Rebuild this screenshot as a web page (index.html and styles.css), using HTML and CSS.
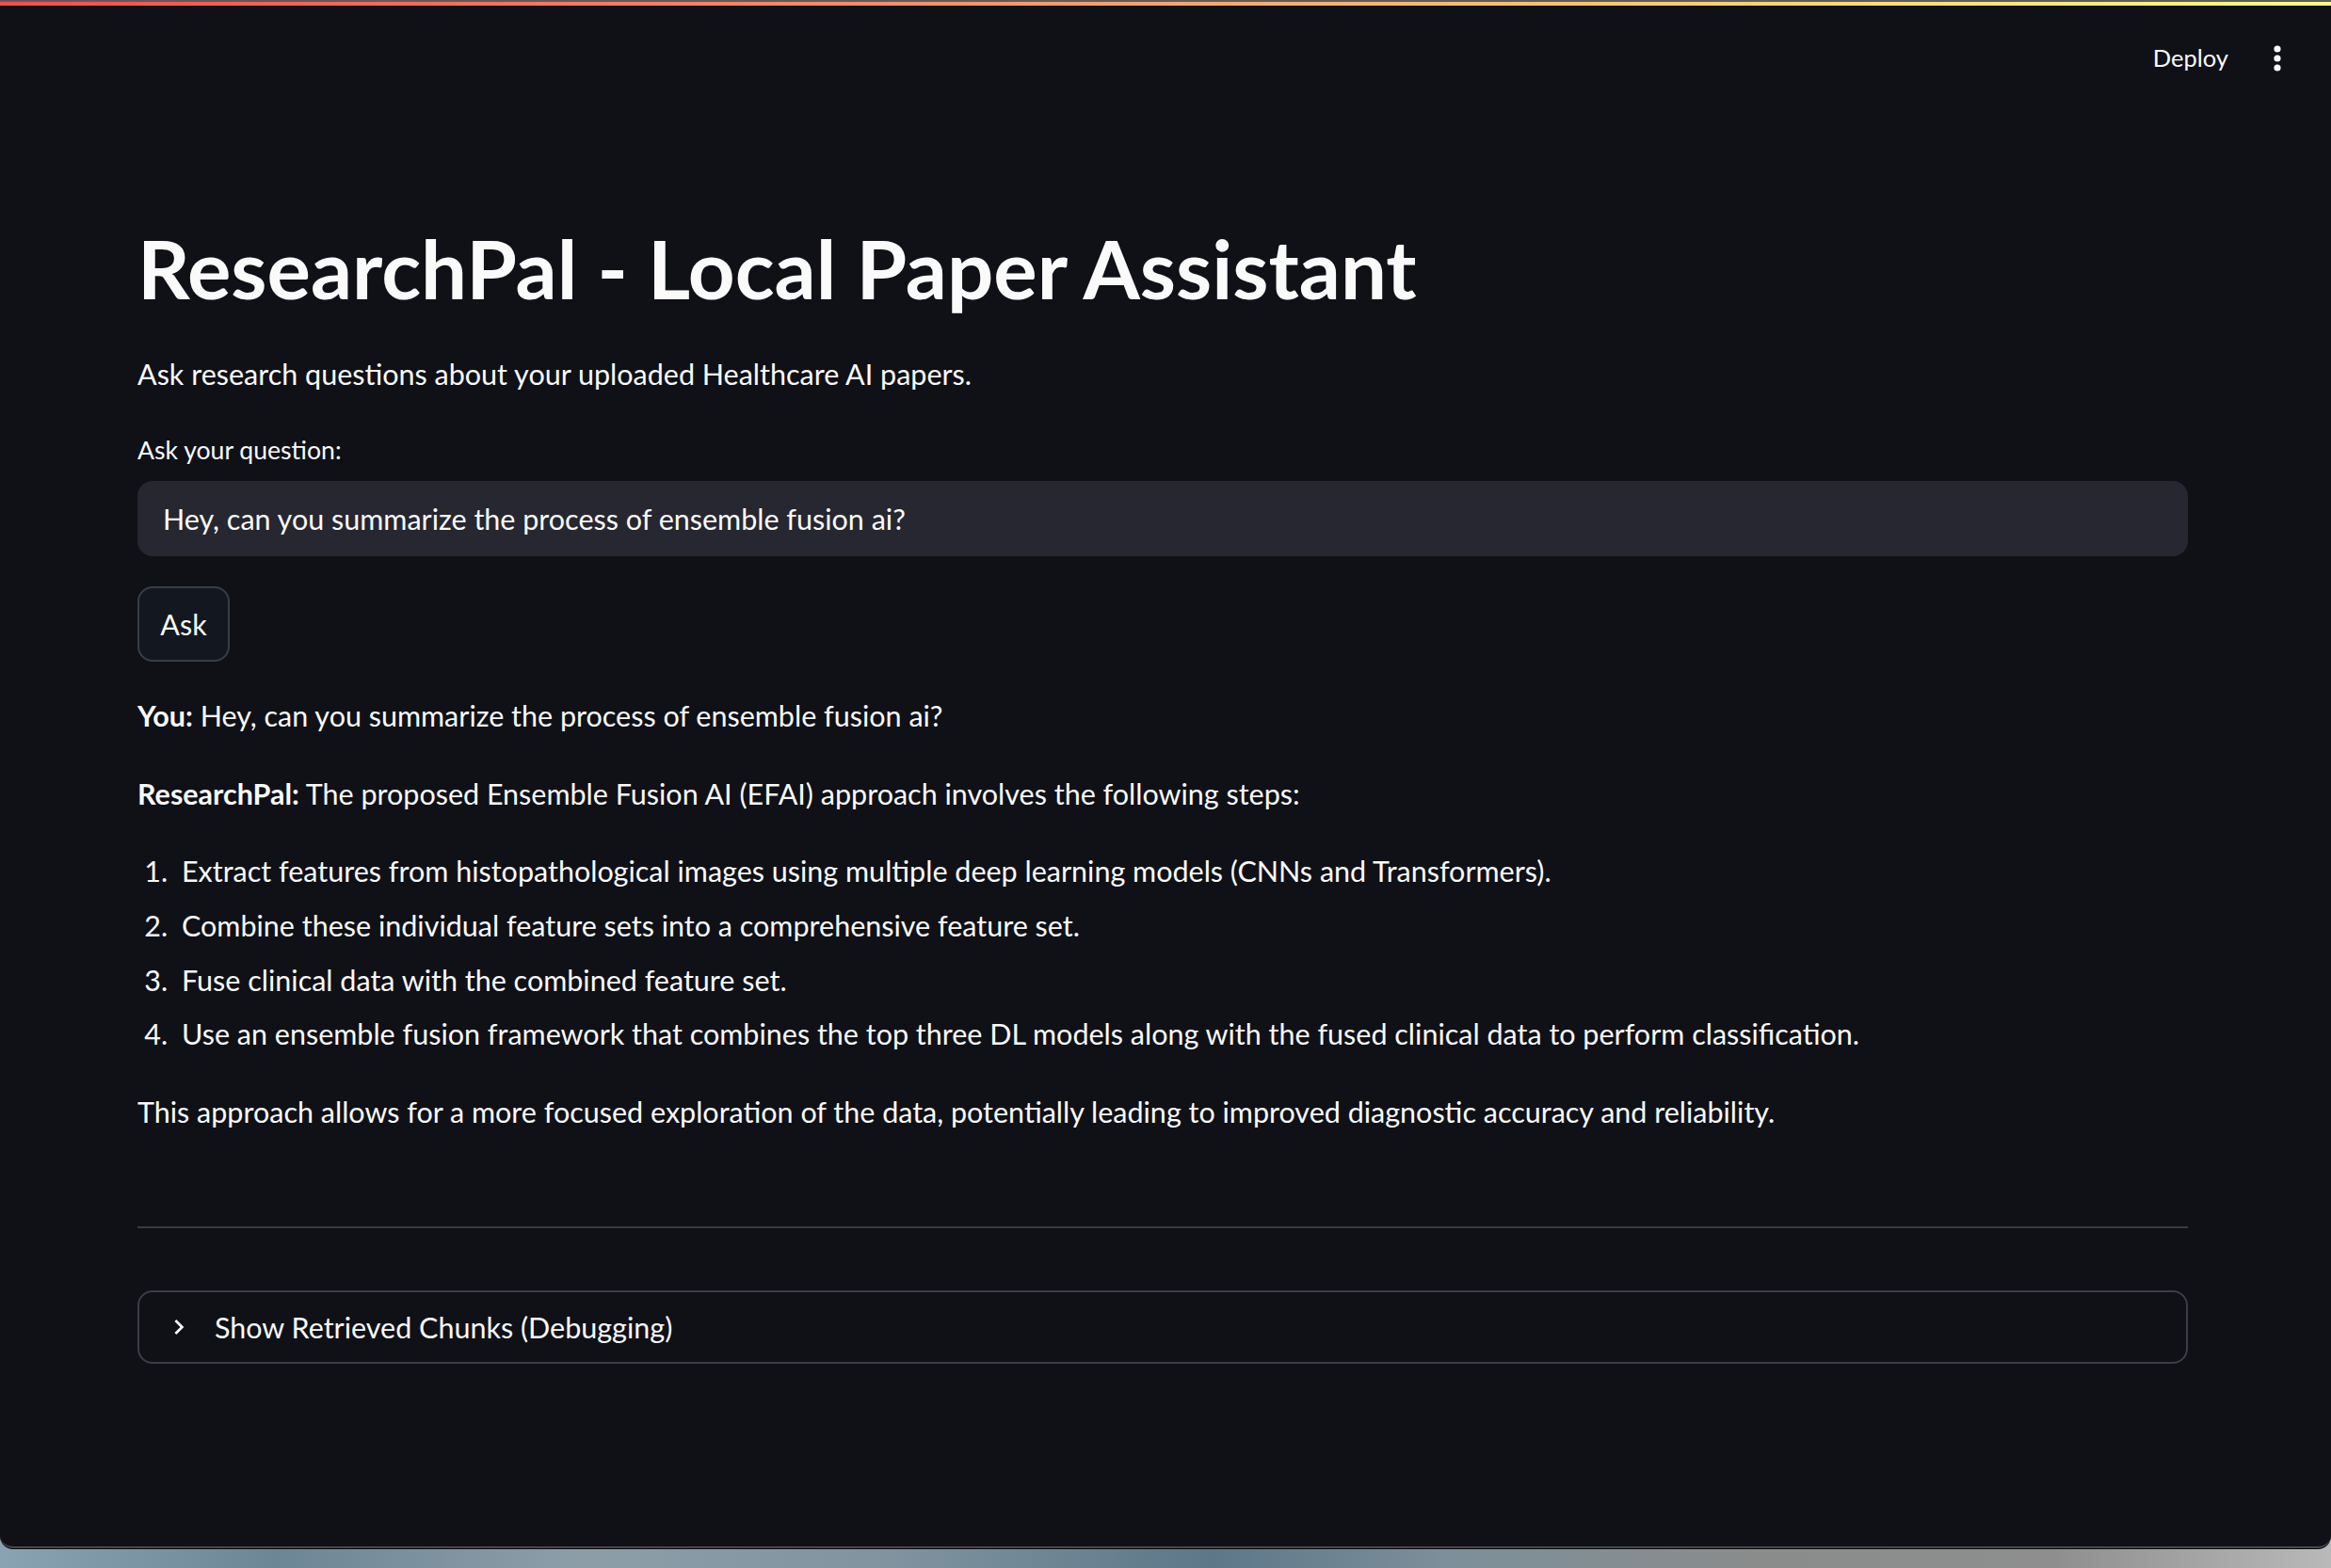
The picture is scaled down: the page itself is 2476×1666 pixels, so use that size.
FILE: index.html
```html
<!DOCTYPE html>
<html lang="en">
<head>
<meta charset="utf-8">
<title>ResearchPal</title>
<link rel="stylesheet" href="styles.css">
</head>
<body>
<div class="window">
  <div class="decoration"></div>
  <header class="topbar">
    <span class="deploy">Deploy</span>
    <svg class="kebab" width="8" height="28" viewBox="0 0 8 28"><circle cx="4" cy="4" r="3.6" fill="#fafafa"/><circle cx="4" cy="14" r="3.6" fill="#fafafa"/><circle cx="4" cy="24" r="3.6" fill="#fafafa"/></svg>
  </header>
  <main class="main">
    <h1 class="title">ResearchPal - Local Paper Assistant</h1>
    <p class="subtitle">Ask research questions about your uploaded Healthcare AI papers.</p>
    <div class="label">Ask your question:</div>
    <div class="input">Hey, can you summarize the process of ensemble fusion ai?</div>
    <button class="btn">Ask</button>
    <p class="msg"><strong>You:</strong> Hey, can you summarize the process of ensemble fusion ai?</p>
    <p class="msg"><strong>ResearchPal:</strong> The proposed Ensemble Fusion AI (EFAI) approach involves the following steps:</p>
    <ol class="steps">
      <li>Extract features from histopathological images using multiple deep learning models (CNNs and Transformers).</li>
      <li>Combine these individual feature sets into a comprehensive feature set.</li>
      <li>Fuse clinical data with the combined feature set.</li>
      <li>Use an ensemble fusion framework that combines the top three DL models along with the fused clinical data to perform classification.</li>
    </ol>
    <p class="msg">This approach allows for a more focused exploration of the data, potentially leading to improved diagnostic accuracy and reliability.</p>
    <hr class="divider">
    <div class="expander">
      <svg class="chev" width="32" height="32" viewBox="0 0 24 24"><path d="M10 6L8.59 7.41 13.17 12l-4.58 4.59L10 18l6-6z" fill="#fafafa"/></svg>
      <span>Show Retrieved Chunks (Debugging)</span>
    </div>
  </main>
</div>
</body>
</html>
```

FILE: styles.css
```css
* { box-sizing: border-box; }
html, body { margin: 0; padding: 0; }
body {
  width: 2476px;
  height: 1666px;
  overflow: hidden;
  background: linear-gradient(90deg, #8aa3b3 0%, #6d8696 12%, #8d9ea8 25%, #7f949f 38%, #5d7789 52%, #7c8f9a 62%, #8a8c8c 75%, #8e8e8e 88%, #b9b9b9 100%);
  font-family: Lato, "Noto Sans", sans-serif;
  color: #fafafa;
}
.window {
  height: 1645px;
  background: #0f1117;
  border-top: 2px solid #5b5b60;
  border-bottom: 2px solid #48484d;
  border-radius: 0 0 14px 14px;
  box-shadow: 0 1px 0 #050505;
  display: flex;
  flex-direction: column;
  overflow: hidden;
}
.decoration {
  height: 4px;
  background: linear-gradient(90deg, #ff4b4b, #fffd80);
  flex: none;
}
.topbar {
  height: 112px;
  display: flex;
  align-items: center;
  justify-content: flex-end;
  gap: 48px;
  padding-right: 53px;
  flex: none;
}
.deploy { font-size: 25.5px; line-height: 1; }
.kebab { display: block; }
.main {
  padding: 0 152px 0 146px;
  font-size: 30.5px;
  line-height: 51.2px;
}
.title {
  margin: 115px 0 0;
  font-size: 86.9px;
  line-height: 1.2;
  font-weight: 700;
}
.subtitle { margin: 34.4px 0 0; }
.label { margin-top: 33px; font-size: 26.6px; line-height: 44.8px; }
.input {
  margin-top: 10.7px;
  height: 80px;
  background: #262730;
  border-radius: 16px;
  display: flex;
  align-items: center;
  padding-left: 27px;
  line-height: 1.2;
}
.btn {
  margin-top: 32px;
  display: block;
  width: 98px;
  height: 80px;
  background: #131720;
  border: 2px solid #3b3d44;
  border-radius: 16px;
  color: #fafafa;
  font: inherit;
  line-height: 1;
  padding: 0;
}
.msg { margin: 31.5px 0 0; }
.msg strong { font-weight: 700; }
.steps { margin: 31px 0 0; padding-left: 40px; }
.steps li { margin-top: 6.7px; padding-left: 7px; }
.steps li:first-child { margin-top: 0; }
.divider {
  margin: 96px 0 0;
  border: none;
  height: 2px;
  background: #3a3b41;
}
.expander {
  margin-top: 66px;
  height: 78px;
  border: 2px solid #3d3e45;
  border-radius: 16px;
  display: flex;
  align-items: center;
  padding-left: 26px;
  gap: 22px;
  line-height: 1.2;
}
.chev { display: block; }
```
